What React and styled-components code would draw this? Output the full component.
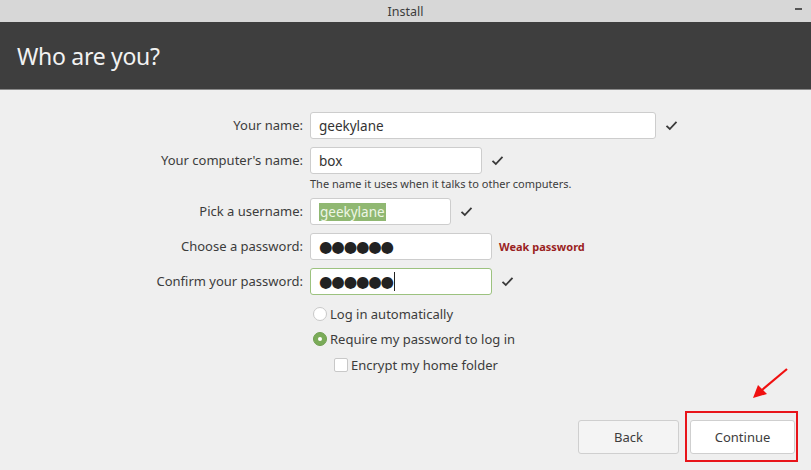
import React from "react";
import styled, { createGlobalStyle } from "styled-components";

const Global = createGlobalStyle`
  html, body { margin: 0; padding: 0; background: #efefef; }
  body { font-family: "Noto Sans", "Open Sans", sans-serif; }
`;

const Window = styled.div`
  width: 811px;
  height: 470px;
  display: flex;
  flex-direction: column;
  background: #efefef;
  position: relative;
  overflow: hidden;
`;

const TitleBar = styled.div`
  height: 22px;
  background: #d7d7d7;
  display: flex;
  align-items: center;
  justify-content: center;
  position: relative;
  font-size: 12.5px;
  color: #3c3c3c;
`;

const Minimize = styled.span`
  position: absolute;
  right: 9px;
  top: 8px;
  width: 7px;
  height: 2px;
  background: #555;
`;

const Header = styled.div`
  height: 67px;
  background: #3e3e3e;
  border-bottom: 1px solid #8a8a8a;
  display: flex;
  align-items: center;
  padding-left: 17px;
  font-size: 23px;
  color: #f2f2f2;
  letter-spacing: -0.3px;
`;

const Body = styled.div`
  flex: 1;
  display: flex;
  flex-direction: column;
  padding-top: 22px;
`;

const Form = styled.div`
  display: grid;
  grid-template-columns: 303px auto;
  column-gap: 7px;
  row-gap: 8px;
  align-items: center;
`;

const Label = styled.div`
  text-align: right;
  font-size: 13px;
  color: #3c3c3c;
  height: 27px;
  line-height: 27px;
`;

const Field = styled.div`
  display: flex;
  align-items: center;
  gap: ${(p) => p.$gap || 9}px;
`;

const Input = styled.div`
  box-sizing: border-box;
  width: ${(p) => p.$w}px;
  height: 27px;
  background: #fff;
  border: 1px solid ${(p) => (p.$focus ? "#9cc27f" : "#cdcdcd")};
  border-radius: 3px;
  display: flex;
  align-items: center;
  padding-left: 8px;
  font-size: 13.5px;
  color: #333;
`;

const Selected = styled.span`
  background: #90b872;
  color: #eef6e6;
  padding: 0 1px;
  line-height: 18px;
`;

const Dots = styled.span`
  font-family: "DejaVu Sans", sans-serif;
  font-size: 15.5px;
  letter-spacing: -1.2px;
  color: #222;
  line-height: 18px;
`;

const Caret = styled.span`
  display: inline-block;
  width: 1px;
  height: 19px;
  background: #222;
  margin-left: 1px;
`;

const Hint = styled.div`
  grid-column: 2;
  font-size: 11px;
  line-height: 14px;
  color: #3c3c3c;
  margin-top: -5px;
  margin-bottom: -1px;
`;

const Weak = styled.span`
  font-size: 11px;
  font-weight: bold;
  color: #9a1f1f;
`;

const Options = styled.div`
  display: flex;
  flex-direction: column;
  padding-left: 313px;
  margin-top: 11px;
  gap: 9px;
`;

const Option = styled.div`
  display: flex;
  align-items: center;
  gap: 3px;
  height: 16px;
  font-size: 13px;
  color: #3c3c3c;
  padding-left: ${(p) => p.$indent || 0}px;
  margin-top: ${(p) => p.$mt || 0}px;
`;

const Radio = styled.span`
  box-sizing: border-box;
  width: 14px;
  height: 14px;
  border-radius: 50%;
  background: ${(p) => (p.$on ? "#7aab58" : "#fff")};
  border: 1px solid ${(p) => (p.$on ? "#6f9f50" : "#c8c8c8")};
  display: flex;
  align-items: center;
  justify-content: center;
  &::after {
    content: "";
    display: ${(p) => (p.$on ? "block" : "none")};
    width: 4px;
    height: 4px;
    border-radius: 50%;
    background: #fff;
  }
`;

const Checkbox = styled.span`
  box-sizing: border-box;
  width: 14px;
  height: 14px;
  border-radius: 2px;
  background: #fff;
  border: 1px solid #c8c8c8;
`;

const Footer = styled.div`
  margin-top: auto;
  display: flex;
  justify-content: flex-end;
  gap: 11px;
  padding: 0 16px 16px 0;
`;

const Button = styled.button`
  box-sizing: border-box;
  width: ${(p) => p.$w}px;
  height: 34px;
  border: 1px solid #cfcfcf;
  border-radius: 3px;
  background: ${(p) => (p.$primary ? "#fff" : "#f4f4f4")};
  font-family: inherit;
  font-size: 13px;
  color: #3c3c3c;
  position: relative;
  padding: 0;
`;

const Highlight = styled.span`
  position: absolute;
  left: -6px;
  top: -10px;
  right: -4px;
  bottom: -9px;
  border: 2px solid #e8141a;
  pointer-events: none;
`;

const Arrow = styled.svg`
  position: absolute;
  left: 748px;
  top: 365px;
`;

const Check = () => (
  <svg width="13" height="11" viewBox="0 0 13 11">
    <path d="M1.5 5.8 L4.8 9 L11.5 1.8" fill="none" stroke="#3a3a3a" strokeWidth="1.8" />
  </svg>
);

export default function App() {
  return (
    <>
      <Global />
      <Window>
        <TitleBar>
          Install
          <Minimize />
        </TitleBar>
        <Header>Who are you?</Header>
        <Body>
          <Form>
            <Label>Your name:</Label>
            <Field>
              <Input $w={346}>geekylane</Input>
              <Check />
            </Field>
            <Label>Your computer's name:</Label>
            <Field>
              <Input $w={172}>box</Input>
              <Check />
            </Field>
            <Hint>The name it uses when it talks to other computers.</Hint>
            <Label>Pick a username:</Label>
            <Field>
              <Input $w={141}>
                <Selected>geekylane</Selected>
              </Input>
              <Check />
            </Field>
            <Label>Choose a password:</Label>
            <Field $gap={7}>
              <Input $w={182}>
                <Dots>●●●●●●</Dots>
              </Input>
              <Weak>Weak password</Weak>
            </Field>
            <Label>Confirm your password:</Label>
            <Field>
              <Input $w={182} $focus>
                <Dots>●●●●●●</Dots>
                <Caret />
              </Input>
              <Check />
            </Field>
          </Form>
          <Options>
            <Option>
              <Radio />
              Log in automatically
            </Option>
            <Option>
              <Radio $on />
              Require my password to log in
            </Option>
            <Option $indent={21} $mt={1}>
              <Checkbox />
              Encrypt my home folder
            </Option>
          </Options>
          <Footer>
            <Button $w={101}>Back</Button>
            <Button $w={105} $primary>
              Continue
              <Highlight />
            </Button>
          </Footer>
        </Body>
        <Arrow width="42" height="38" viewBox="0 0 42 38">
          <path d="M39 4 L14 25" stroke="#f01010" strokeWidth="2.2" fill="none" />
          <path d="M5 33 L10 20 L19 29 Z" fill="#f01010" />
        </Arrow>
      </Window>
    </>
  );
}
